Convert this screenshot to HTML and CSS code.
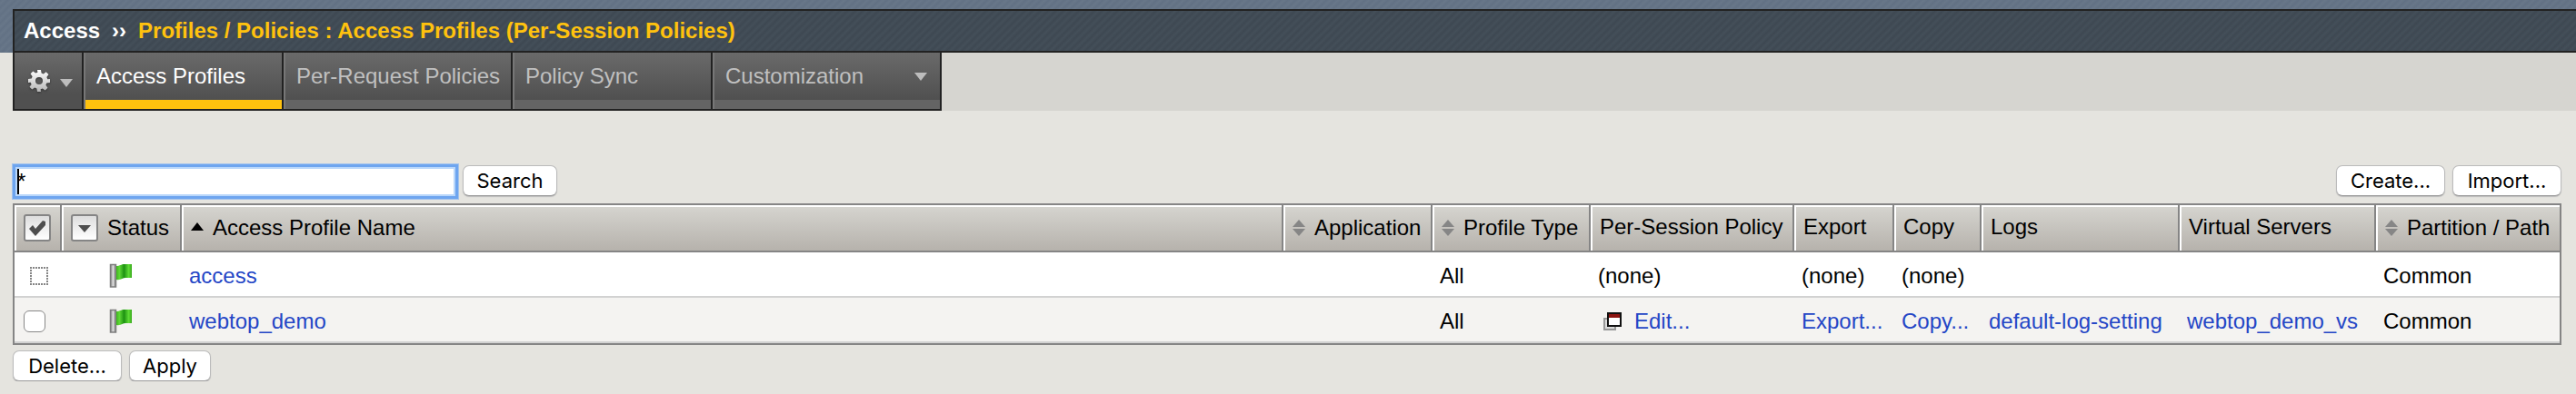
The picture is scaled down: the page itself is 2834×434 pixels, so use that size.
FILE: index.html
```html
<!DOCTYPE html>
<html lang="en">
<head>
<meta charset="utf-8">
<title>Access Profiles (Per-Session Policies)</title>
<link rel="stylesheet" href="styles.css">
</head>
<body>
<svg class="defs" aria-hidden="true">
  <defs>
    <linearGradient id="gear-fill" x1="0" y1="0" x2="0" y2="1"><stop offset="0" stop-color="#fff"/><stop offset="1" stop-color="#b5b5b5"/></linearGradient>
    <linearGradient id="pole" x1="0" y1="0" x2="1" y2="0"><stop offset="0" stop-color="#8a8a8a"/><stop offset=".5" stop-color="#dcdcdc"/><stop offset="1" stop-color="#777"/></linearGradient>
    <linearGradient id="cloth" x1="0" y1="0" x2="1" y2="0"><stop offset="0" stop-color="#3fb51f"/><stop offset=".2" stop-color="#5fd836"/><stop offset=".5" stop-color="#1e9312"/><stop offset=".8" stop-color="#5fdc35"/><stop offset="1" stop-color="#37a81c"/></linearGradient>
    <symbol id="flag" viewBox="0 0 26 28">
      <path d="M1.500 1.500h6v24.500h-6z" fill="url(#pole)" stroke="#7d7d7d" stroke-width="1.500"/>
      <path d="M8 3c4 0 5-2 9-2h8v15h-7c-3 0-5 3-10 2z" fill="url(#cloth)"/>
    </symbol>
    <symbol id="sort" viewBox="0 0 14 18"><path d="M7 0l7 8H0zM0 10h14l-7 8z" fill="#868686"/></symbol>
  </defs>
</svg>
<header class="banner">
  <nav class="crumbs" aria-label="Breadcrumb">
    <span>Access</span><span>››</span><span class="crumb-current">Profiles / Policies : Access Profiles (Per-Session Policies)</span>
  </nav>
</header>
<nav class="tabs" aria-label="Sections">
  <button class="tab tab-gear" type="button" aria-label="Options">
    <svg class="gear" viewBox="0 0 26 26" aria-hidden="true"><path fill="url(#gear-fill)" fill-rule="evenodd" d="M11 1h4l.6 3.500 2.200.9 2.900-2.100 2.800 2.800-2.100 2.900.9 2.200L25 11v4l-3.700.6-.9 2.200 2.100 2.900-2.800 2.800-2.900-2.100-2.200.9L15 25h-4l-.6-3.600-2.200-.9-2.900 2.100-2.800-2.800 2.100-2.900-.9-2.200L1 15v-4l3.700-.6.9-2.200-2.100-2.900 2.800-2.800 2.900 2.100 2.200-.9zM13 9a4 4 0 1 0 0 8 4 4 0 0 0 0-8z"/></svg>
    <svg class="caret" viewBox="0 0 14 9" aria-hidden="true"><path d="M0 0h14L7 9z" fill="#bdbdbd"/></svg>
  </button>
  <a class="tab tab-active tab-profiles" href="#">Access Profiles</a>
  <a class="tab tab-request" href="#">Per-Request Policies</a>
  <a class="tab tab-sync" href="#">Policy Sync</a>
  <a class="tab tab-custom" href="#">Customization
    <svg class="caret" viewBox="0 0 14 9" aria-hidden="true"><path d="M0 0h14L7 9z" fill="#bdbdbd"/></svg>
  </a>
</nav>
<main class="content">
  <div class="toolbar">
    <input class="search" type="text" value="*" aria-label="Search profiles">
    <button class="btn btn-search" type="button">Search</button>
    <span class="spacer"></span>
    <button class="btn btn-wide" type="button">Create...</button>
    <button class="btn btn-wide" type="button">Import...</button>
  </div>
  <table class="grid">
    <colgroup><col class="c-check"><col class="c-status"><col><col class="c-app"><col class="c-type"><col class="c-policy"><col class="c-export"><col class="c-copy"><col class="c-logs"><col class="c-vs"><col class="c-path"></colgroup>
    <thead>
      <tr>
        <th><button class="box" type="button" aria-label="Select all"><svg viewBox="0 0 20 20" aria-hidden="true"><path d="M1 11l4-4 3 4 8-9 3 1v4L8 19z" fill="#4d4d4d"/></svg></button></th>
        <th><span class="head"><button class="box" type="button" aria-label="Filter status"><svg viewBox="0 0 20 20" aria-hidden="true"><path d="M3 7h14l-7 8z" fill="#4d4d4d"/></svg></button>Status</span></th>
        <th><span class="head"><svg class="sort" viewBox="0 0 14 18" aria-hidden="true"><path d="M7 3l7 9H0z" fill="#000"/></svg>Access Profile Name</span></th>
        <th><span class="head"><svg class="sort" aria-hidden="true"><use href="#sort"/></svg>Application</span></th>
        <th><span class="head"><svg class="sort" aria-hidden="true"><use href="#sort"/></svg>Profile Type</span></th>
        <th class="plain">Per-Session Policy</th>
        <th class="plain">Export</th>
        <th class="plain">Copy</th>
        <th class="plain">Logs</th>
        <th class="plain">Virtual Servers</th>
        <th><span class="head"><svg class="sort" aria-hidden="true"><use href="#sort"/></svg>Partition / Path</span></th>
      </tr>
    </thead>
    <tbody>
      <tr>
        <td class="check"><svg class="locked" viewBox="0 0 20 20" aria-hidden="true"><path d="M0 1h20M0 19h20M1 3v15M19 3v15" fill="none" stroke="#858585" stroke-width="2" stroke-dasharray="2 1"/></svg></td>
        <td class="status"><svg class="flag" role="img" aria-label="Available"><use href="#flag"/></svg></td>
        <td><a href="#">access</a></td><td></td><td>All</td><td>(none)</td><td>(none)</td><td>(none)</td><td></td><td></td><td>Common</td>
      </tr>
      <tr>
        <td class="check"><input class="tick" type="checkbox" aria-label="Select webtop_demo"></td>
        <td class="status"><svg class="flag" role="img" aria-label="Available"><use href="#flag"/></svg></td>
        <td><a href="#">webtop_demo</a></td><td></td><td>All</td>
        <td><a class="edit" href="#"><svg class="window" viewBox="0 0 20 20" aria-hidden="true"><path d="M1 7h12v12H1z" fill="#ddd" stroke="#999" stroke-width="2"/><path d="M5 1h14v14H5z" fill="#fff" stroke="#111" stroke-width="2"/><path d="M6 2h12v4H6z" fill="#8c1410"/></svg>Edit...</a></td>
        <td><a href="#">Export...</a></td><td><a href="#">Copy...</a></td><td><a href="#">default-log-setting</a></td><td><a href="#">webtop_demo_vs</a></td><td>Common</td>
      </tr>
    </tbody>
  </table>
  <div class="actions">
    <button class="btn btn-wide" type="button">Delete...</button>
    <button class="btn" type="button">Apply</button>
  </div>
</main>
</body>
</html>
```
FILE: styles.css
```css
* { box-sizing: border-box; }
body {
  margin: 0;
  background: #e5e4df;
  color: #000;
  font: 24px/28px "Liberation Sans", Arial, sans-serif;
}
a { color: #2446c6; text-decoration: none; }
svg { display: block; flex: none; }
.defs { position: absolute; width: 0; height: 0; }

.banner {
  padding: 10px 0 0 14px;
  background: repeating-linear-gradient(135deg, #627184, #687789 3px, #627184 6px);
}
.crumbs {
  display: flex;
  gap: 13px;
  padding: 0 10px;
  border: 2px solid #222;
  border-right: 0;
  background: repeating-linear-gradient(135deg, #3e4852, #444f59 3px, #3e4852 6px);
  color: #fff;
  font-weight: bold;
  line-height: 44px;
}
.crumb-current { color: #ffc20e; }

.tabs {
  display: flex;
  height: 64px;
  margin-left: 14px;
  background: #d6d5d0;
}
.tab {
  display: flex;
  justify-content: space-between;
  padding: 12px 14px;
  border: solid #222;
  border-width: 0 2px 2px 0;
  background: linear-gradient(#6a6a6a, #505050 52px, #646464 52px);
  box-shadow: inset 2px 0 #777;
  color: #c0c0c0;
  white-space: nowrap;
}
.tab-active {
  background: linear-gradient(#6a6a6a, #505050 52px, #ffc20e 52px);
  color: #fff;
}
.tab-gear {
  align-items: center;
  width: 78px;
  padding: 0 10px 0 14px;
  border-left-width: 2px;
  background: linear-gradient(#6a6a6a, #505050 46px);
  box-shadow: none;
}
.tab-profiles { width: 220px; }
.tab-request { width: 252px; }
.tab-sync { width: 220px; }
.tab-custom { width: 252px; }
.gear { width: 26px; height: 26px; filter: drop-shadow(0 1px 1px #333); }
.caret { width: 14px; height: 9px; }
.tab-custom .caret { margin-top: 10px; }
.tab-gear .caret { margin-top: 4px; }

.content { padding: 56px 16px 0 14px; }
.toolbar { display: flex; align-items: center; gap: 8px; height: 42px; margin-bottom: 4px; }
.search {
  width: 484px;
  height: 32px;
  margin: 2px 0 0 3px;
  padding: 0;
  border: 2px solid #b9d7fb;
  outline: 3px solid #6ea5ef;
  box-shadow: 0 0 0 4px #a3c3ec;
  background: linear-gradient(#000, #000) 0 0 / 2px 100% no-repeat #fff;
  font: 24px/26px "Liberation Sans", Arial, sans-serif;
}
.spacer { flex: 1; }
.btn {
  height: 34px;
  min-width: 90px;
  padding: 0;
  border: 1px solid #bbb;
  border-bottom-color: #999;
  border-radius: 7px;
  background: #fff;
  box-shadow: 0 1px 1px #bbb;
  color: #000;
  font: 22px/30px Inter, sans-serif;
}
.btn-search { width: 104px; }
.btn-wide { min-width: 120px; }
.actions { display: flex; gap: 8px; padding-top: 6px; }

.grid {
  width: 100%;
  table-layout: fixed;
  border: 2px solid #858585;
  border-spacing: 0;
  background: #fff;
}
.c-check { width: 52px; }
.c-status { width: 132px; }
.c-app { width: 164px; }
.c-type { width: 174px; }
.c-policy { width: 224px; }
.c-export { width: 110px; }
.c-copy { width: 96px; }
.c-logs { width: 218px; }
.c-vs { width: 216px; }
.c-path { width: 202px; }
th {
  height: 52px;
  padding: 0 0 0 10px;
  border: solid #858585;
  border-width: 0 2px 2px 0;
  background: linear-gradient(#d6d5d0, #b6b2ac);
  box-shadow: inset 2px 2px #fff;
  font-weight: normal;
  text-align: left;
  white-space: nowrap;
}
th:last-child { border-right: 0; }
.plain { padding-bottom: 2px; }
.head { display: flex; align-items: center; gap: 10px; }
.box {
  display: flex;
  align-items: center;
  justify-content: center;
  width: 30px;
  height: 30px;
  padding: 0;
  border: 2px solid #858585;
  border-radius: 3px;
  background: linear-gradient(#ddd, #fff);
}
.box svg { width: 20px; height: 20px; }
.sort { width: 14px; height: 18px; }
td {
  height: 50px;
  padding: 4px 0 0 8px;
  border-bottom: 2px solid #d2d2d2;
  white-space: nowrap;
}
tbody tr:nth-child(even) { background: #f4f3f1; }
.check { padding-left: 10px; }
.status { padding-left: 52px; }
.flag { width: 26px; height: 28px; }
.locked { width: 20px; height: 20px; margin-left: 7px; }
.tick {
  display: block;
  appearance: none;
  width: 24px;
  height: 24px;
  margin: 0;
  border: 1px solid #888;
  border-radius: 6px;
  background: #fff;
}
.edit { display: flex; align-items: center; gap: 14px; padding-left: 6px; }
.window { width: 20px; height: 20px; }
```
